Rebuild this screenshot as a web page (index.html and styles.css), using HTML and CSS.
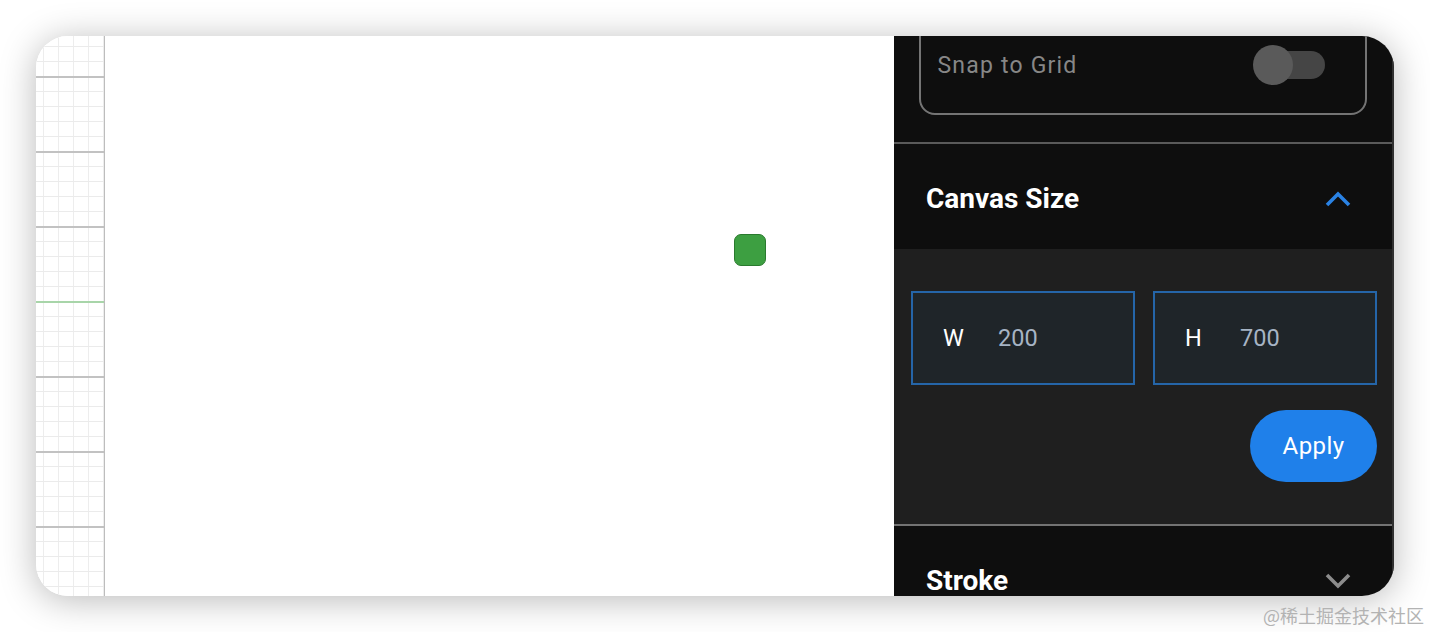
FILE: index.html
```html
<!DOCTYPE html>
<html lang="en">
<head>
<meta charset="utf-8">
<title>Canvas Editor</title>
<link rel="stylesheet" href="styles.css">
</head>
<body>
<div class="page">
  <div class="frame">
    <div class="grid-strip"></div>
    <div class="canvas">
      <div class="node"></div>
    </div>
    <aside class="panel">
      <section class="snap-section">
        <div class="snap-card">
          <span class="snap-label">Snap to Grid</span>
          <span class="switch"><span class="switch-thumb"></span></span>
        </div>
      </section>
      <section class="acc">
        <div class="acc-head">
          <span class="acc-title">Canvas Size</span>
          <svg class="chev chev-up" width="26" height="16" viewBox="0 0 26 16"><path d="M2 14 L13 3 L24 14" fill="none" stroke="currentColor" stroke-width="3.6"/></svg>
        </div>
        <div class="acc-body">
          <div class="size-row">
            <div class="size-field"><span class="size-key">W</span><span class="size-val">200</span></div>
            <div class="size-field"><span class="size-key">H</span><span class="size-val">700</span></div>
          </div>
          <div class="actions"><button class="apply">Apply</button></div>
        </div>
      </section>
      <section class="acc acc-last">
        <div class="acc-head">
          <span class="acc-title">Stroke</span>
          <svg class="chev chev-down" width="26" height="16" viewBox="0 0 26 16"><path d="M2 2 L13 13 L24 2" fill="none" stroke="currentColor" stroke-width="3.6"/></svg>
        </div>
      </section>
    </aside>
  </div>
  <div class="watermark">@稀土掘金技术社区</div>
</div>
</body>
</html>
```

FILE: styles.css
```css
* { box-sizing: border-box; }
html, body { margin: 0; padding: 0; background: #ffffff; }
body { font-family: Roboto, "Noto Sans", "Liberation Sans", sans-serif; width: 1430px; height: 632px; overflow: hidden; }

.page { padding: 36px 0 0 36px; }

.frame {
  width: 1358px;
  height: 560px;
  border-radius: 32px;
  overflow: hidden;
  display: flex;
  background: #ffffff;
  box-shadow: 0 4px 36px rgba(0, 0, 0, 0.28);
}

.grid-strip {
  width: 69px;
  flex: none;
  border-right: 1.5px solid #bdbdbd;
  background-color: #ffffff;
  background-image:
    linear-gradient(#a8d5a9, #a8d5a9),
    linear-gradient(to bottom, #c2c2c2 2px, transparent 2px),
    linear-gradient(to bottom, #ebebeb 1.5px, transparent 1.5px),
    linear-gradient(to right, #ededed 1.5px, transparent 1.5px);
  background-repeat: no-repeat, repeat, repeat, repeat;
  background-size: 100% 2px, 100% 75px, 100% 15px, 15px 100%;
  background-position: 0 265px, 0 40px, 0 10px, 7px 0;
}

.canvas {
  flex: 1;
  position: relative;
  background: #ffffff;
}

.node {
  position: absolute;
  left: 629px;
  top: 198px;
  width: 32px;
  height: 32px;
  border-radius: 7px;
  background: #3d9f41;
  border: 1px solid #2a7a2e;
}

.panel {
  width: 500px;
  flex: none;
  background: #0e0e0e;
  border-right: 2px solid #303030;
  display: flex;
  flex-direction: column;
}

.snap-section {
  height: 106px;
  padding: 0 25px 0 25px;
  flex: none;
}

.snap-card {
  margin-top: -22px;
  height: 101px;
  border: 2.5px solid #747474;
  border-radius: 16px;
  display: flex;
  align-items: center;
  justify-content: space-between;
  padding: 0 40px 0 16.5px;
}

.snap-label {
  color: #878787;
  font-size: 23px;
  letter-spacing: 1.2px;
  margin-top: 1px;
}

.switch {
  position: relative;
  width: 72px;
  height: 28px;
  display: block;
}
.switch::before {
  content: "";
  display: block;
  margin-left: 10px;
  width: 62px;
  height: 28px;
  border-radius: 14px;
  background: #454545;
}
.switch-thumb {
  position: absolute;
  left: 0;
  top: -6px;
  width: 40px;
  height: 40px;
  border-radius: 50%;
  background: #5a5a5a;
}

.acc { border-top: 2px solid #5a5a5a; flex: none; }
.acc-last { border-top-color: #737373; }

.acc-head {
  height: 105px;
  display: flex;
  align-items: center;
  justify-content: space-between;
  padding: 4px 41px 0 32px;
}

.acc-title {
  color: #ffffff;
  font-size: 28px;
  font-weight: 700;
}

.chev { display: block; }
.chev-up { color: #2a82e4; }
.chev-down { color: #8c8c8c; }

.acc-body {
  background: #1f1f1f;
  padding: 42px 15px 42px 17px;
}

.size-row {
  display: flex;
  gap: 18px;
}

.size-field {
  width: 224px;
  height: 94px;
  flex: none;
  border: 2px solid #2565a8;
  background: #1f2529;
  display: flex;
  align-items: center;
  padding-left: 30px;
  font-size: 23.5px;
}

.size-key { color: #ffffff; width: 55px; }
.size-val { color: #a6b4c4; }

.actions {
  display: flex;
  justify-content: flex-end;
  margin-top: 25px;
}

.apply {
  width: 127px;
  height: 72px;
  border: none;
  border-radius: 36px;
  background: #1f80ea;
  color: #ffffff;
  font-family: Roboto, "Noto Sans", sans-serif;
  font-size: 24px;
  letter-spacing: 0.4px;
  padding: 0;
}

.watermark {
  width: 1388px;
  text-align: right;
  margin-top: 7px;
  font-family: "Noto Sans CJK SC", sans-serif;
  font-size: 18px;
  color: #b3b3b3;
  line-height: 24px;
}
```
